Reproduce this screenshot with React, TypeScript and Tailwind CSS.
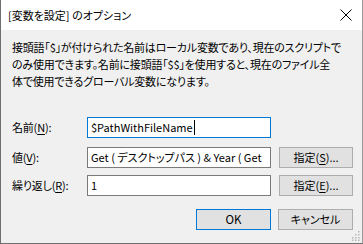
import React from "react";

const font = "font-['Yu_Gothic_UI','Noto_Sans_CJK_JP',sans-serif] [font-feature-settings:'palt']";

function Field({
  label,
  mnemonic,
  value,
  focused,
  button,
  buttonKey,
}: {
  label: string;
  mnemonic: string;
  value: string;
  focused?: boolean;
  button?: boolean;
  buttonKey?: string;
}) {
  return (
    <div className="flex h-[21px] items-center">
      <div className="w-[75px] text-[11px] leading-none tracking-[-0.2px]">
        {label}(<span className="underline underline-offset-2">{mnemonic}</span>):
      </div>
      <div
        className={`flex h-[21px] w-[184px] items-center overflow-hidden whitespace-nowrap border bg-white pl-[3px] text-[11px] ${
          focused ? "border-[#0078d7]" : "border-[#7a7a7a]"
        }`}
      >
        {value}
        {focused && <span className="ml-px inline-block h-[15px] w-px bg-black" />}
      </div>
      {button && (
        <button className="ml-[8px] flex h-[21px] w-[74px] items-center justify-center border border-[#adadad] bg-[#e1e1e1] text-[11px] leading-none">
          指定(<span className="underline underline-offset-2">{buttonKey}</span>)...
        </button>
      )}
    </div>
  );
}

export default function App() {
  return (
    <div
      className={`relative flex h-[244px] w-[363px] flex-col border-b border-l border-r border-b-[#6e6e6e] border-l-[#6e6e6e] border-r-[#9a9a9a] bg-[#f0f0f0] text-black ${font}`}
    >
      {/* Title bar */}
      <div className="flex h-[30px] shrink-0 items-center justify-between bg-white pl-[7px] pr-[10px]">
        <span className="text-[11px] leading-none">[変数を設定] のオプション</span>
        <svg width="12" height="12" viewBox="0 0 12 12">
          <path d="M0.5 0.5 L11.5 11.5 M11.5 0.5 L0.5 11.5" stroke="#000" strokeWidth="1" />
        </svg>
      </div>

      {/* Description */}
      <div className="mt-[9px] whitespace-nowrap pl-[11px] text-[11px] leading-[17px] tracking-[-0.2px]">
        接頭語「$」が付けられた名前はローカル変数であり、現在のスクリプトで
        <br />
        のみ使用できます。名前に接頭語「$$」を使用すると、現在のファイル全
        <br />
        体で使用できるグローバル変数になります。
      </div>

      {/* Form */}
      <div className="mt-[27px] flex flex-col pl-[11px]">
        <Field label="名前" mnemonic="N" value="$PathWithFileName" focused />
        <div className="mt-[9px]">
          <Field
            label="値"
            mnemonic="V"
            value="Get ( デスクトップパス ) & Year ( Get"
            button
            buttonKey="S"
          />
        </div>
        <div className="mt-[7px]">
          <Field label="繰り返し" mnemonic="R" value="1" button buttonKey="E" />
        </div>
      </div>

      {/* Footer buttons */}
      <div className="mt-[13px] flex justify-end gap-[7px] pr-[9px]">
        <button className="flex h-[21px] w-[75px] items-center justify-center border border-[#0078d7] bg-[#e1e1e1] text-[11.5px] leading-none">
          OK
        </button>
        <button className="flex h-[21px] w-[75px] items-center justify-center border border-[#adadad] bg-[#e1e1e1] text-[11px] leading-none">
          キャンセル
        </button>
      </div>

      {/* Resize grip */}
      <svg className="absolute bottom-[2px] right-[2px]" width="10" height="10" viewBox="0 0 10 10">
        {[
          [8, 0],
          [8, 3],
          [5, 3],
          [8, 6],
          [5, 6],
          [2, 6],
          [8, 8.5],
          [5, 8.5],
          [2, 8.5],
        ].map(([x, y], i) => (
          <rect key={i} x={x} y={y} width="1.5" height="1.5" fill="#b8b8b8" />
        ))}
      </svg>
    </div>
  );
}
